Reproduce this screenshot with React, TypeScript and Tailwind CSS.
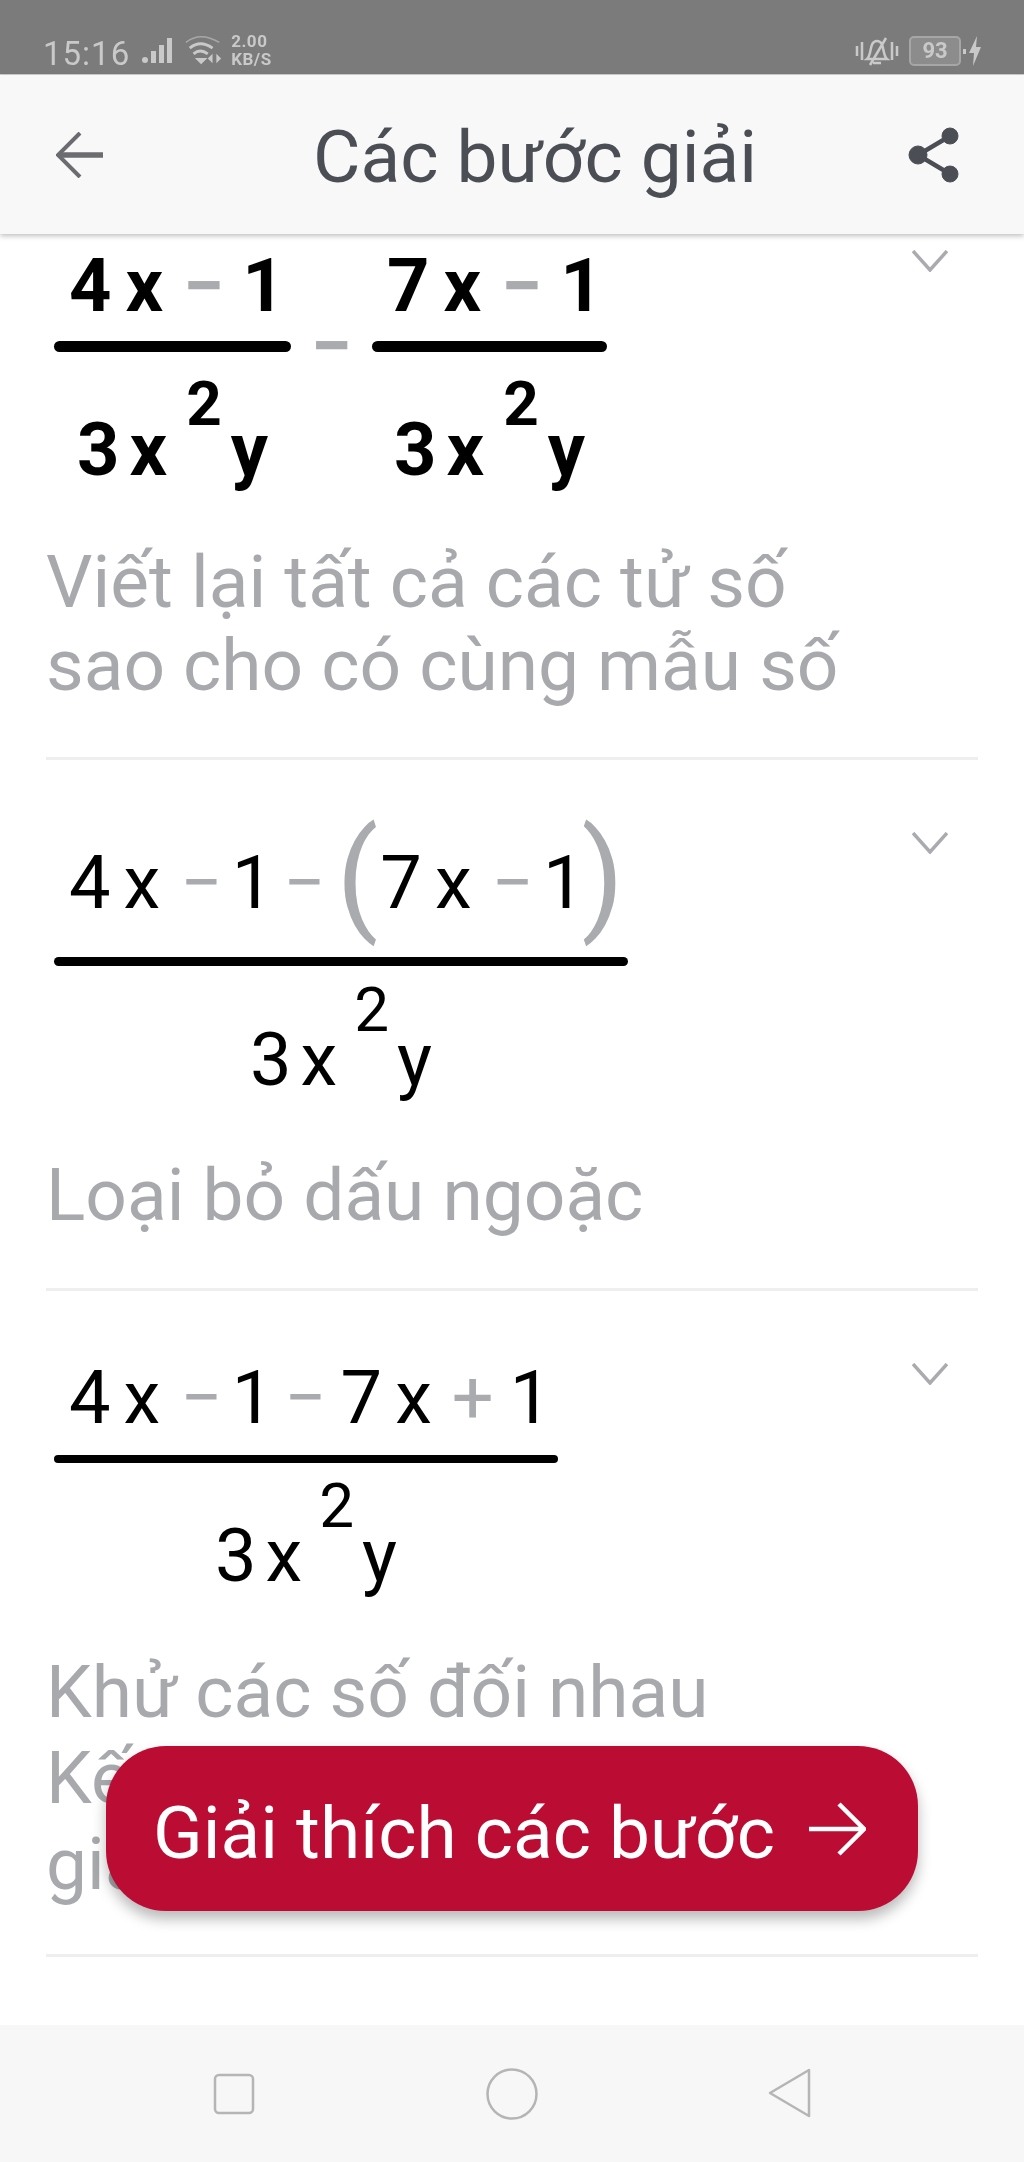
import React from 'react';

const Chevron: React.FC<{ className: string }> = ({ className }) => (
  <svg className={className} width="36" height="22" viewBox="0 0 36 22" fill="none">
    <path d="M1 1 L18 20 L35 1" stroke="#a9abae" strokeWidth="3.5" />
  </svg>
);

// one glyph of a formula; muted ones are the operators
const T: React.FC<{ c: string; muted?: boolean; className?: string }> = ({ c, muted, className = '' }) => (
  <span className={`block ${muted ? 'text-[#a9abae]' : 'text-black'} ${className}`}>{c}</span>
);

const Denominator: React.FC<{ className?: string; supClass: string; xClass?: string; yClass?: string }> = ({
  className = '',
  supClass,
  xClass = 'ml-[9px]',
  yClass = 'ml-[8px]',
}) => (
  <div className={`flex h-[56px] items-end justify-center ${className}`}>
    <T c="3" />
    <T c="x" className={xClass} />
    <T c="2" className={`text-[62px] ${supClass}`} />
    <T c="y" className={yClass} />
  </div>
);

const StatusBar: React.FC = () => (
  <div className="flex h-[75px] shrink-0 items-end justify-between border-b border-b-[#cfcfcf] bg-[#7b7b7b] pb-[2px] pl-[43px] pr-[42px] text-[#c9c9c9]">
    <div className="flex items-end blur-[0.5px]">
      <span className="text-[33px] leading-[36px] tracking-[1px]">15:16</span>
      <svg className="mb-[8px] ml-[10px]" width="34" height="26" viewBox="0 0 32 26" fill="#c9c9c9">
        <rect x="1" y="19" width="6" height="6" rx="3" />
        <rect x="10" y="13" width="5" height="12" />
        <rect x="18" y="7" width="5" height="18" />
        <rect x="26" y="0" width="5" height="25" />
      </svg>
      <svg className="mb-[6px] ml-[11px]" width="38" height="32" viewBox="0 0 40 32" fill="none" stroke="#c9c9c9">
        <path d="M1 8 Q16 -4 36 8" strokeWidth="1.5" stroke="#a8a8a8" />
        <path d="M5 14 Q16 5 29 14" strokeWidth="3" />
        <path d="M9 20 Q16 14 24 20" strokeWidth="3" />
        <path d="M14 26 L17 29 L20 26 Z" strokeWidth="3" />
        <path d="M29 20 L24 25 L29 30 Z M33 20 L38 25 L33 30 Z" fill="#c9c9c9" stroke="none" />
      </svg>
      <div className="mb-[4px] ml-[8px] flex flex-col text-[17px] font-bold leading-[18px] tracking-[0.5px]">
        <span>2.00</span>
        <span>KB/S</span>
      </div>
    </div>
    <div className="mb-[5px] flex items-center blur-[0.5px]">
      <svg width="44" height="32" viewBox="0 0 44 32" fill="none" stroke="#c9c9c9" strokeWidth="2.5">
        <path d="M2 11 V21 M7 7 V25 M37 7 V25 M42 11 V21" />
        <path d="M12 24 C17 20 14 6 22 6 C30 6 27 20 32 24 Z M18 28 H26 M31 3 L15 30" />
      </svg>
      <div className="ml-[10px] flex h-[30px] w-[52px] items-center justify-center rounded-[5px] border-2 border-[#a6a6a6] bg-[#8c8c8c] text-[22px] font-bold leading-none">
        93
      </div>
      <span className="ml-[2px] h-[5px] w-[3px] bg-[#c9c9c9]" />
      <svg className="ml-[2px]" width="14" height="32" viewBox="0 0 14 32" fill="#c9c9c9">
        <path d="M9 1 L1 18 H6 L5 31 L13 12 H8 Z" />
      </svg>
    </div>
  </div>
);

const Header: React.FC = () => (
  <div className="relative z-10 flex h-[159px] shrink-0 items-center justify-between bg-[#f8f8f8] pl-[56px] pr-[64px] shadow-[0_2px_5px_rgba(0,0,0,0.25)]">
    <svg width="48" height="46" viewBox="0 0 48 46" fill="none" stroke="#6b6c70">
      <path d="M24 1 L2 23 L24 45" strokeWidth="4" />
      <path d="M3 23 H47" strokeWidth="5.5" />
    </svg>
    <h1 className="ml-[58px] mt-[6px] text-[73px] font-normal leading-none text-[#4b4e55]">Các bước giải</h1>
    <svg width="52" height="56" viewBox="0 0 52 56" fill="#4b4e55" stroke="#4b4e55">
      <circle cx="42" cy="9" r="8" />
      <circle cx="10" cy="28" r="9" />
      <circle cx="42" cy="47" r="8" />
      <path d="M42 9 L10 28 L42 47" strokeWidth="4.5" fill="none" />
    </svg>
  </div>
);

const NavBar: React.FC = () => (
  <div className="flex h-[137px] shrink-0 items-start bg-[#f7f7f7] pt-[43px]">
    <svg className="ml-[213px] mt-[5px]" width="42" height="42" viewBox="0 0 42 42" fill="none" stroke="#b5b5b5" strokeWidth="2.5">
      <rect x="2" y="2" width="38" height="38" rx="4" />
    </svg>
    <svg className="ml-[231px]" width="52" height="52" viewBox="0 0 52 52" fill="none" stroke="#b5b5b5" strokeWidth="2.5">
      <circle cx="26" cy="26" r="24.5" />
    </svg>
    <svg className="ml-[230px]" width="44" height="50" viewBox="0 0 44 50" fill="none" stroke="#b5b5b5" strokeWidth="2.5" strokeLinejoin="round">
      <path d="M2 25 L41 2 V48 Z" />
    </svg>
  </div>
);

export default function App() {
  return (
    <div className="flex h-[2162px] w-[1024px] flex-col overflow-hidden bg-white font-['Roboto',sans-serif]">
      <StatusBar />
      <Header />

      <main className="relative flex-1 overflow-hidden px-[46px] text-[74px] leading-[56px]">
        {/* step 1 */}
        <section className="h-[526px] border-b-[3px] border-b-[#eeeeee]">
          <div className="flex justify-between pr-[30px] pt-[24px]">
            <div className="flex font-bold">
              <div className="ml-[8px] w-[237px]">
                <div className="flex h-[56px] items-end pl-[15px]">
                  <T c="4" />
                  <T c="x" className="ml-[14px]" />
                  <T c="−" muted className="ml-[20px]" />
                  <T c="1" className="ml-[18px]" />
                </div>
                <div className="mt-[27px] h-[11px] rounded-full bg-black" />
                <Denominator className="mt-[70px]" supClass="mb-[46px] ml-[19px]" xClass="ml-[10px]" yClass="ml-[9px]" />
              </div>
              <T c="−" muted className="ml-[20px] mt-[60px] h-[56px]" />
              <div className="ml-[20px] w-[235px]">
                <div className="flex h-[56px] items-end pl-[15px]">
                  <T c="7" />
                  <T c="x" className="ml-[14px]" />
                  <T c="−" muted className="ml-[20px]" />
                  <T c="1" className="ml-[18px]" />
                </div>
                <div className="mt-[27px] h-[11px] rounded-full bg-black" />
                <Denominator className="mt-[70px]" supClass="mb-[46px] ml-[19px]" xClass="ml-[10px]" yClass="ml-[9px]" />
              </div>
            </div>
            <Chevron className="mt-[-8px]" />
          </div>
          <p className="mt-[63px] text-[73px] leading-[83px] text-[#a7a9ac]">
            Viết lại tất cả các tử số
            <br />
            sao cho có cùng mẫu số
          </p>
        </section>

        {/* step 2 */}
        <section className="h-[531px] border-b-[3px] border-b-[#eeeeee]">
          <div className="flex justify-between pr-[30px] pt-[95px]">
            <div className="ml-[8px] w-[574px]">
              <div className="flex h-[56px] items-end pl-[15px]">
                <T c="4" />
                <T c="x" className="ml-[13px]" />
                <T c="−" muted className="ml-[20px]" />
                <T c="1" className="ml-[9px]" />
                <T c="−" muted className="ml-[10px]" />
                <T c="(" muted className="mb-[6px] ml-[11px] text-[122px]" />
                <T c="7" className="ml-[2px]" />
                <T c="x" className="ml-[13px]" />
                <T c="−" muted className="ml-[20px]" />
                <T c="1" className="ml-[9px]" />
                <T c=")" muted className="mb-[6px] ml-[-3px] text-[122px]" />
              </div>
              <div className="mt-[46px] h-[9px] rounded-full bg-black" />
              <Denominator className="mt-[66px]" supClass="mb-[50px] ml-[17px]" />
            </div>
            <Chevron className="mt-[-23px]" />
          </div>
          <p className="mt-[65px] text-[73px] leading-[84px] text-[#a7a9ac]">Loại bỏ dấu ngoặc</p>
        </section>

        {/* step 3 */}
        <section className="h-[666px] border-b-[3px] border-b-[#eeeeee]">
          <div className="flex justify-between pr-[30px] pt-[79px]">
            <div className="ml-[8px] w-[504px]">
              <div className="flex h-[56px] items-end pl-[15px]">
                <T c="4" />
                <T c="x" className="ml-[13px]" />
                <T c="−" muted className="ml-[20px]" />
                <T c="1" className="ml-[9px]" />
                <T c="−" muted className="ml-[11px]" />
                <T c="7" className="ml-[14px]" />
                <T c="x" className="ml-[13px]" />
                <T c="+" muted className="ml-[20px]" />
                <T c="1" className="ml-[16px]" />
              </div>
              <div className="mt-[29px] h-[8px] rounded-full bg-black" />
              <Denominator className="mt-[65px]" supClass="mb-[50px] ml-[17px]" />
            </div>
            <Chevron className="mt-[-7px]" />
          </div>
          <p className="mt-[65px] text-[73px] leading-[86px] text-[#a7a9ac]">
            Khử các số đối nhau
            <br />
            Kết hợp hai phép tính
            <br />
            giản
          </p>
        </section>

        <button className="absolute left-[106px] top-[1512px] flex h-[165px] w-[812px] items-center justify-between rounded-[60px] bg-[#bb0c33] pl-[47px] pr-[52px] text-[73px] leading-none text-white shadow-[0_8px_14px_rgba(0,0,0,0.28)]">
          <span className="pt-[9px]">Giải thích các bước</span>
          <svg width="58" height="54" viewBox="0 0 58 54" fill="none" stroke="#ffffff" strokeWidth="4.5">
            <path d="M1 27 H55 M31 2 L56 27 L31 52" />
          </svg>
        </button>
      </main>

      <NavBar />
    </div>
  );
}
